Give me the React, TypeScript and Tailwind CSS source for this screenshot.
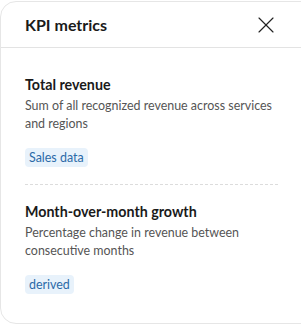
import { X } from "lucide-react";

type Metric = {
  name: string;
  description: string;
  tag: string;
};

const metrics: Metric[] = [
  {
    name: "Total revenue",
    description: "Sum of all recognized revenue across services and regions",
    tag: "Sales data",
  },
  {
    name: "Month-over-month growth",
    description: "Percentage change in revenue between consecutive months",
    tag: "derived",
  },
];

export default function App() {
  return (
    <div
      className="h-[326px] w-[301px] overflow-hidden bg-white"
      style={{ fontFamily: "Lato, 'Noto Sans', sans-serif" }}
    >
      <div className="mt-px h-[323px] w-[320px] rounded-2xl border border-[#e6e6e6] bg-white">
        <div className="flex h-[46px] w-[301px] items-center justify-between border-b border-[#e3e3e3] pl-6 pr-[22px]">
          <h2 className="text-[16px] leading-[22px] font-bold text-[#1a1a1a]">KPI metrics</h2>
          <button type="button" className="text-[#222]" aria-label="Close">
            <X className="size-[28px]" strokeWidth={1} />
          </button>
        </div>
        <div className="w-[301px] px-6 pt-[27px]">
          {metrics.map((metric, i) => (
            <div
              key={metric.name}
              className={i === 0 ? "border-b border-dashed border-[#dcdcdc] pb-4" : "pt-[17px]"}
            >
              <h3 className="text-[14.25px] leading-[20px] font-bold text-[#1a1a1a]">
                {metric.name}
              </h3>
              <p className="mt-[2px] text-[12.45px] leading-[18px] text-[#555]">
                {metric.description}
              </p>
              <span className="mt-[15px] inline-block rounded-[4px] bg-[#e8f2fb] px-1 py-px text-[12.45px] leading-[17px] text-[#2b6aa8]">
                {metric.tag}
              </span>
            </div>
          ))}
        </div>
      </div>
    </div>
  );
}
